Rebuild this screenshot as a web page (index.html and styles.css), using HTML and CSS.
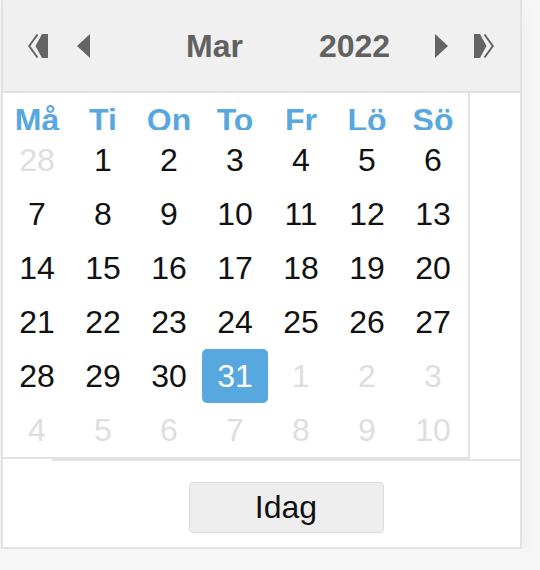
FILE: index.html
```html
<!DOCTYPE html>
<html lang="sv">
<head>
<meta charset="utf-8">
<title>Datumväljare</title>
<link rel="stylesheet" href="styles.css">
</head>
<body>
<div class="picker">
  <div class="head">
    <span class="nav nav-prev2">
      <svg width="20" height="24" viewBox="0 0 20 24"><polyline points="9.5,0.5 1.2,12 9.5,23.5" fill="none" stroke="#646464" stroke-width="2"/><polygon points="14,0 20,0 20,24 14,24 7.5,12" fill="#646464"/></svg>
    </span>
    <span class="nav nav-prev">
      <svg width="13" height="24" viewBox="0 0 13 24"><polygon points="13,0 13,24 0,12" fill="#646464"/></svg>
    </span>
    <span class="title month">Mar</span>
    <span class="title year">2022</span>
    <span class="nav nav-next">
      <svg width="13" height="24" viewBox="0 0 13 24"><polygon points="0,0 0,24 13,12" fill="#646464"/></svg>
    </span>
    <span class="nav nav-next2">
      <svg width="20" height="24" viewBox="0 0 20 24"><polyline points="10.5,0.5 18.8,12 10.5,23.5" fill="none" stroke="#646464" stroke-width="2"/><polygon points="6,0 0,0 0,24 6,24 12.5,12" fill="#646464"/></svg>
    </span>
  </div>
  <div class="table">
    <div class="weekdays">
      <span>Må</span><span>Ti</span><span>On</span><span>To</span><span>Fr</span><span>Lö</span><span>Sö</span>
    </div>
    <div class="days">
      <span class="other">28</span><span>1</span><span>2</span><span>3</span><span>4</span><span>5</span><span>6</span>
      <span>7</span><span>8</span><span>9</span><span>10</span><span>11</span><span>12</span><span>13</span>
      <span>14</span><span>15</span><span>16</span><span>17</span><span>18</span><span>19</span><span>20</span>
      <span>21</span><span>22</span><span>23</span><span>24</span><span>25</span><span>26</span><span>27</span>
      <span>28</span><span>29</span><span>30</span><span class="selected">31</span><span class="other">1</span><span class="other">2</span><span class="other">3</span>
      <span class="other">4</span><span class="other">5</span><span class="other">6</span><span class="other">7</span><span class="other">8</span><span class="other">9</span><span class="other">10</span>
    </div>
  </div>
  <div class="foot">
    <button class="today">Idag</button>
  </div>
</div>
</body>
</html>
```

FILE: styles.css
```css
html, body {
  margin: 0;
  padding: 0;
}
body {
  background: #f6f6f6;
  font-family: "Liberation Sans", Arial, Helvetica, sans-serif;
}
.picker {
  width: 517px;
  margin-left: 1px;
  background: #ffffff;
  border: 2px solid #e2e2e2;
  border-top: 0;
  box-shadow: 0 6px 18px rgba(0, 0, 0, 0.04);
}
.head {
  height: 91px;
  background: #f0f0f0;
  border-bottom: 2px solid #e2e2e2;
  display: flex;
  align-items: center;
}
.nav {
  display: flex;
  align-items: center;
  height: 24px;
}
.nav svg {
  display: block;
}
.nav-prev2 { margin-left: 25px; }
.nav-prev { margin-left: 29px; }
.title {
  font-size: 32px;
  font-weight: bold;
  color: #616161;
  line-height: 32px;
}
.month { margin-left: 96px; }
.year { margin-left: 76px; }
.nav-next { margin-left: 45px; }
.nav-next2 { margin-left: 26px; }

.table {
  width: 462px;
  padding: 0 2px 0 1px;
  border-right: 2px solid #e2e2e2;
  border-bottom: 2px solid #e2e2e2;
}
.weekdays {
  display: grid;
  grid-template-columns: repeat(7, 66px);
  height: 37px;
  overflow: hidden;
  margin-bottom: 3px;
}
.weekdays span {
  display: block;
  padding-top: 11px;
  text-align: center;
  font-size: 32px;
  line-height: 32px;
  font-weight: bold;
  color: #58a8df;
}
.days {
  display: grid;
  grid-template-columns: repeat(7, 66px);
  grid-auto-rows: 54px;
}
.days span {
  display: block;
  text-align: center;
  font-size: 32px;
  line-height: 54px;
  color: #111111;
}
.days span.other {
  color: #dedede;
}
.days span.selected {
  background: #57a8de;
  color: #ffffff;
  border-radius: 5px;
}
.foot {
  margin-left: 49px;
  border-top: 2px solid #e2e2e2;
  padding: 21px 0 14px;
  text-align: center;
}
.today {
  display: inline-block;
  width: 195px;
  height: 51px;
  margin: 0;
  padding: 0;
  background: #eeeeee;
  border: 1px solid #dcdcdc;
  border-radius: 4px;
  font-family: "Liberation Sans", Arial, Helvetica, sans-serif;
  font-size: 32px;
  color: #111111;
  vertical-align: top;
}
```
